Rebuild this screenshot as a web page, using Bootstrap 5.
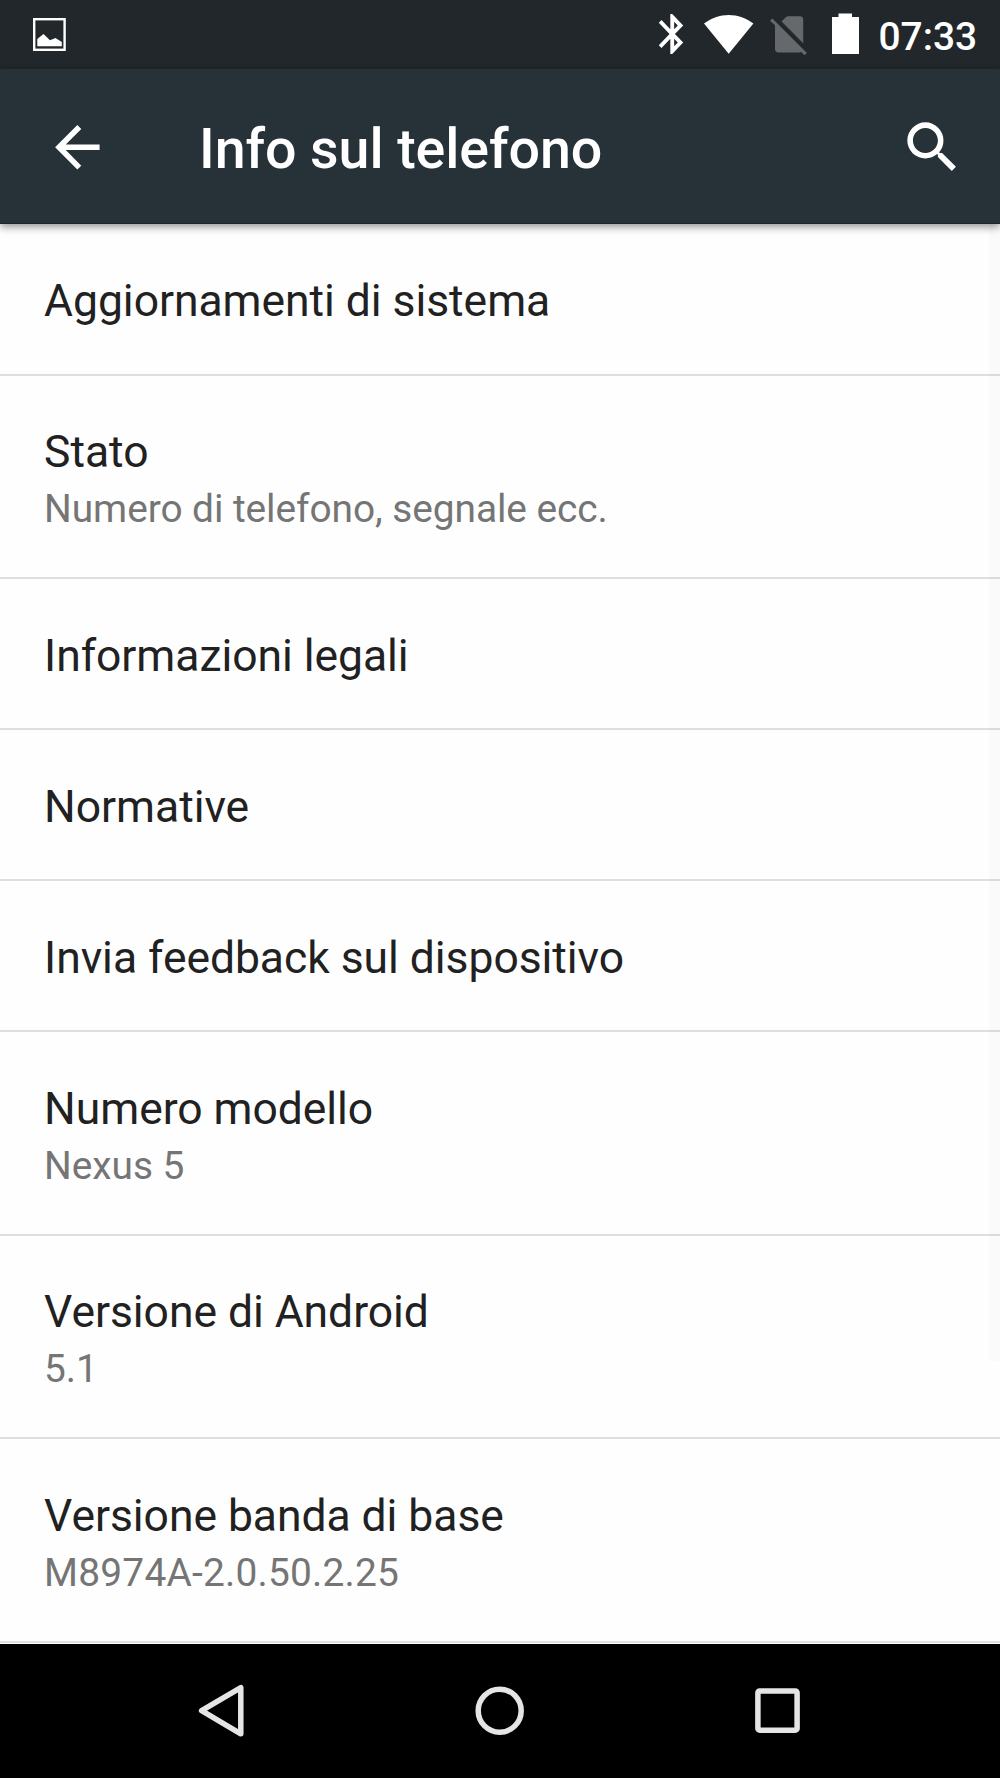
<!DOCTYPE html>
<html lang="it">
<head>
<meta charset="utf-8">
<meta name="viewport" content="width=device-width, initial-scale=1">
<title>Info sul telefono</title>
<link href="https://cdn.jsdelivr.net/npm/bootstrap@5.3.0/dist/css/bootstrap.min.css" rel="stylesheet">
<style>
body{font-family:Roboto,"Noto Sans",sans-serif;background:#fefefe;overflow:hidden}
.screen{width:1000px;height:1778px}
.statusbar{height:69px;background:#22272b;color:#fff}
.statusbar svg,.appbar svg,.softkeys svg{display:block;flex:none}
.clock{font-size:38.9px;line-height:46px;font-weight:500;padding-top:14px;margin-left:18.5px;width:121.5px}
.appbar{height:155px;background:#273238;color:#fff;box-shadow:0 3px 8px rgba(0,0,0,.42);border-bottom:1px solid #1d262b;z-index:2;padding:2px 34px 0 44.3px}
.appbar h1{font-size:55.56px;line-height:65px;font-weight:500;letter-spacing:-.09px;margin:4px 0 0 88px}
.appbar .btn{color:#fff;line-height:0}
.settings{--bs-list-group-bg:#fefefe;--bs-list-group-border-color:#dedede;padding-top:.6px}
.settings .list-group-item{height:150.93px;padding:50.7px 44px 0 44.1px;border-width:0 0 2px;color:#212121}
.settings .two-line{height:203.7px}
.pref-title{font-size:44.44px;line-height:52px;letter-spacing:-.04px}
.pref-note{font-size:38.89px;line-height:46px;margin-top:8px;color:#757575;letter-spacing:-.07px}
.pref-note.build{letter-spacing:.2px}
.thumb{right:0;top:0;width:11.5px;height:1137px;background:rgba(0,0,0,.014);z-index:1}
.softkeys{height:134px;background:#000}
.softkeys .btn{width:277.8px;line-height:0}
</style>
<script src="https://cdn.jsdelivr.net/npm/bootstrap@5.3.0/dist/js/bootstrap.bundle.min.js"></script>
</head>
<body>
<div class="screen d-flex flex-column">
  <div class="statusbar d-flex align-items-start">
    <svg width="100" height="69" viewBox="0 0 100 69"><rect x="34.2" y="19.2" width="30.4" height="30.6" fill="none" stroke="#fff" stroke-width="2.4"/><path d="M37.3 46.3V39l6.2-5 6.5 6.2 5.5-2.3 6.3 4v4.4z" fill="#fff"/></svg>
    <svg class="ms-auto" width="40" height="69" viewBox="650 0 40 69"><path transform="translate(649.2 10) scale(1.92 2)" fill="#fff" d="M17.71 7.71 12 2h-1v7.59L6.41 5 5 6.41 10.59 12 5 17.59 6.41 19 11 14.41V22h1l5.71-5.71-4.3-4.29zM13 5.83l1.88 1.88L13 9.59zM14.88 16.29 13 18.17v-3.76z"/></svg>
    <svg width="70" height="69" viewBox="690 0 70 69"><path d="M704 23.6C718 12 739.5 12 753.4 23.6L728.7 53.8z" fill="#fff"/></svg>
    <svg width="60" height="69" viewBox="760 0 60 69"><g fill="#65696c"><path d="M781.6 21.5l4.2-4.2q1-1 2.6-1h11.4q3.4 0 3.4 3.4v23.6z"/><path d="M775 25.3V49q0 3.4 3.4 3.4H799.8q.9 0 1.5-.3l3.2 3.2 2.4-2.4L772.4 18.4 770 20.8z"/></g></svg>
    <svg width="40" height="69" viewBox="820 0 40 69"><path d="M832 17h6.5v-3.6h13.5V17H859v37H832z" fill="#fff"/></svg>
    <div class="clock">07:33</div>
  </div>

  <header class="appbar d-flex align-items-center position-relative">
    <button class="btn p-0 border-0" aria-label="Indietro"><svg width="66.7" height="66.7" viewBox="0 0 24 24" fill="currentColor"><path d="M20 11H7.83l5.59-5.59L12 4l-8 8 8 8 1.41-1.41L7.83 13H20z"/></svg></button>
    <h1>Info sul telefono</h1>
    <button class="btn p-0 border-0 ms-auto" aria-label="Cerca"><svg width="66.7" height="66.7" viewBox="0 0 24 24" fill="currentColor"><path d="M15.5 14h-.79l-.28-.27A6.471 6.471 0 0 0 16 9.5 6.5 6.5 0 1 0 9.5 16c1.61 0 3.09-.59 4.23-1.57l.27.28v.79l5 4.99L20.49 19zm-6 0C7.01 14 5 11.99 5 9.5S7.01 5 9.5 5 14 7.01 14 9.5 11.99 14 9.5 14z"/></svg></button>
  </header>

  <main class="flex-grow-1 position-relative">
    <div class="settings list-group list-group-flush">
      <div class="list-group-item"><div class="pref-title">Aggiornamenti di sistema</div></div>
      <div class="list-group-item two-line"><div class="pref-title">Stato</div><div class="pref-note">Numero di telefono, segnale ecc.</div></div>
      <div class="list-group-item"><div class="pref-title">Informazioni legali</div></div>
      <div class="list-group-item"><div class="pref-title">Normative</div></div>
      <div class="list-group-item"><div class="pref-title">Invia feedback sul dispositivo</div></div>
      <div class="list-group-item two-line"><div class="pref-title">Numero modello</div><div class="pref-note">Nexus 5</div></div>
      <div class="list-group-item two-line"><div class="pref-title">Versione di Android</div><div class="pref-note">5.1</div></div>
      <div class="list-group-item two-line border-bottom border-2"><div class="pref-title">Versione banda di base</div><div class="pref-note build">M8974A-2.0.50.2.25</div></div>
    </div>
    <div class="thumb position-absolute"></div>
  </main>

  <nav class="softkeys d-flex justify-content-center align-items-center">
    <button class="btn p-0 border-0 d-flex justify-content-center" aria-label="Indietro"><svg width="60" height="60" viewBox="192.2 1681 60 60"><path d="M241 1687.6V1733.8L201.8 1710.7z" fill="none" stroke="#e5e5e5" stroke-width="5.5" stroke-linejoin="round"/></svg></button>
    <button class="btn p-0 border-0 d-flex justify-content-center" aria-label="Home"><svg width="60" height="60" viewBox="0 0 60 60"><circle cx="29.7" cy="29.7" r="21.5" fill="none" stroke="#e5e5e5" stroke-width="5.5"/></svg></button>
    <button class="btn p-0 border-0 d-flex justify-content-center" aria-label="Recenti"><svg width="60" height="60" viewBox="0 0 60 60"><rect x="9.9" y="10" width="39.2" height="39.2" rx="1.8" fill="none" stroke="#e5e5e5" stroke-width="5.5"/></svg></button>
  </nav>
</div>
</body>
</html>
